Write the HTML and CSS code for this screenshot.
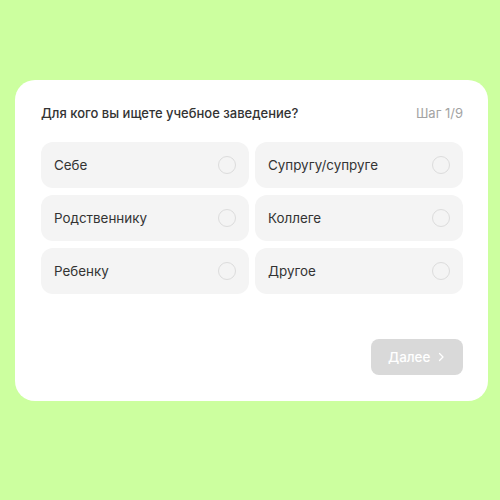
FILE: index.html
```html
<!DOCTYPE html>
<html lang="ru">
<head>
<meta charset="utf-8">
<link rel="stylesheet" href="styles.css">
</head>
<body>
<div class="card">
  <div class="head">
    <div class="title">Для кого вы ищете учебное заведение?</div>
    <div class="step">Шаг 1/9</div>
  </div>
  <div class="grid">
    <div class="opt"><span>Себе</span><i class="radio"></i></div>
    <div class="opt"><span>Супругу/супруге</span><i class="radio"></i></div>
    <div class="opt"><span>Родственнику</span><i class="radio"></i></div>
    <div class="opt"><span>Коллеге</span><i class="radio"></i></div>
    <div class="opt"><span>Ребенку</span><i class="radio"></i></div>
    <div class="opt"><span>Другое</span><i class="radio"></i></div>
  </div>
  <div class="foot">
    <button class="next">Далее <svg width="6" height="10" viewBox="0 0 6 10"><path d="M1.5 1.5l3.5 3.5-3.5 3.5" fill="none" stroke="#fff" stroke-width="1.3" stroke-linecap="round" stroke-linejoin="round"/></svg></button>
  </div>
</div>
</body>
</html>
```
FILE: styles.css
```css
html, body {
  margin: 0;
  padding: 0;
}
body {
  width: 500px;
  height: 500px;
  background: #ccff9f;
  font-family: Inter, "Noto Sans", sans-serif;
  padding-top: 80px;
  box-sizing: border-box;
}
.card {
  margin-left: 15px;
  width: 473px;
  height: 321px;
  box-sizing: border-box;
  background: #fff;
  border-radius: 20px;
  padding: 25px 25px 26px 26px;
  display: flex;
  flex-direction: column;
}
.head {
  display: flex;
  justify-content: space-between;
  align-items: center;
  height: 16px;
}
.title {
  font-size: 13px;
  font-weight: 500;
  color: #333;
}
.step {
  font-size: 13px;
  color: #a3a3a3;
}
.grid {
  margin-top: 21px;
  display: grid;
  grid-template-columns: 208px 208px;
  column-gap: 6px;
  row-gap: 7px;
}
.opt {
  height: 46px;
  background: #f4f4f4;
  border-radius: 12px;
  display: flex;
  align-items: center;
  justify-content: space-between;
  padding: 0 13px 1px 13px;
  box-sizing: border-box;
  font-size: 13.4px;
  color: #333;
}
.radio {
  width: 18px;
  height: 18px;
  box-sizing: border-box;
  border: 1.2px solid #dcdcdc;
  border-radius: 50%;
}
.foot {
  margin-top: auto;
  display: flex;
  justify-content: flex-end;
}
.next {
  width: 92px;
  height: 36px;
  border: none;
  border-radius: 8px;
  background: #d9d9d9;
  color: #fff;
  font-family: Inter, "Noto Sans", sans-serif;
  font-size: 13.4px;
  font-weight: 500;
  display: flex;
  align-items: center;
  justify-content: flex-start;
  gap: 8px;
  padding: 0 0 0 17px;
}
```
